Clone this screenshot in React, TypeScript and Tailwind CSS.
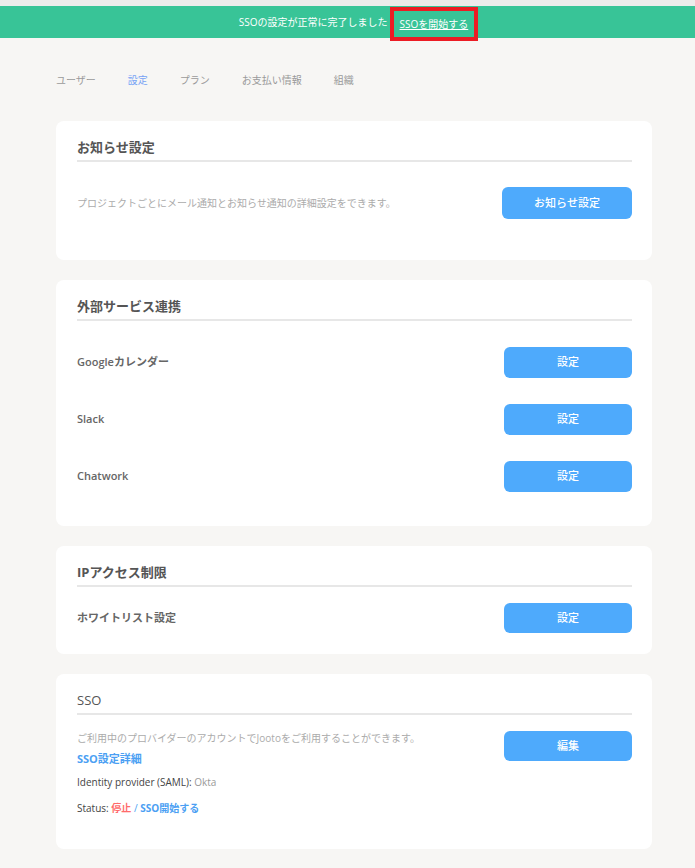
const tabs = [
  { label: "ユーザー", active: false },
  { label: "設定", active: true },
  { label: "プラン", active: false },
  { label: "お支払い情報", active: false },
  { label: "組織", active: false },
];

const Btn = ({ label, className = "" }: { label: string; className?: string }) => (
  <button
    className={`flex shrink-0 items-center justify-center rounded-[6px] bg-[#4eaafc] text-[11px] font-medium text-white ${className}`}
  >
    {label}
  </button>
);

const CardTitle = ({ title, bold = true }: { title: string; bold?: boolean }) => (
  <>
    <h2
      className={`text-[13px] leading-[20px] text-[#555] ${bold ? "font-bold" : "font-normal"}`}
    >
      {title}
    </h2>
    <div className="mt-[3px] h-[2px] bg-[#e7e7e7]" />
  </>
);

const App = () => {
  return (
    <div className="min-h-screen bg-[#f7f6f4] font-['Open_Sans','Noto_Sans_CJK_JP',sans-serif]">
      <div className="h-[6px] bg-[#ececeb]" />
      <div className="flex h-[32px] items-center justify-center bg-[#38c497] pl-[22px] text-[10px] text-white">
        <span>SSOの設定が正常に完了しました</span>
        <a
          href="#"
          className="ml-[2px] translate-y-[2px] border-[4px] border-[#ec1c24] px-[6px] leading-[26px] underline"
        >
          SSOを開始する
        </a>
      </div>

      <nav className="mt-[34px] flex gap-[32px] pl-[56px] text-[10px] leading-[16px]">
        {tabs.map((t) => (
          <span key={t.label} className={t.active ? "text-[#76a3f4]" : "text-[#9a9a9a]"}>
            {t.label}
          </span>
        ))}
      </nav>

      <div className="ml-[56px] mt-[33px] flex w-[596px] flex-col gap-[20px] pb-[19px]">
        {/* お知らせ設定 */}
        <section className="rounded-[8px] bg-white pb-[41px] pl-[21px] pr-[20px] pt-[16px]">
          <CardTitle title="お知らせ設定" />
          <div className="mt-[25px] flex items-center justify-between">
            <p className="text-[10px] text-[#ababab]">
              プロジェクトごとにメール通知とお知らせ通知の詳細設定をできます。
            </p>
            <Btn label="お知らせ設定" className="h-[32px] w-[130px]" />
          </div>
        </section>

        {/* 外部サービス連携 */}
        <section className="rounded-[8px] bg-white pb-[34px] pl-[21px] pr-[20px] pt-[16px]">
          <CardTitle title="外部サービス連携" />
          <div className="mt-[26px] flex flex-col gap-[26px]">
            {["Googleカレンダー", "Slack", "Chatwork"].map((name) => (
              <div key={name} className="flex items-center justify-between">
                <span className="text-[11px] font-semibold text-[#666]">{name}</span>
                <Btn label="設定" className="h-[31px] w-[128px]" />
              </div>
            ))}
          </div>
        </section>

        {/* IPアクセス制限 */}
        <section className="rounded-[8px] bg-white pb-[21px] pl-[21px] pr-[20px] pt-[16px]">
          <CardTitle title="IPアクセス制限" />
          <div className="mt-[16px] flex items-center justify-between">
            <span className="text-[11px] font-semibold text-[#666]">ホワイトリスト設定</span>
            <Btn label="設定" className="h-[30px] w-[128px]" />
          </div>
        </section>

        {/* SSO */}
        <section className="rounded-[8px] bg-white pb-[34px] pl-[21px] pr-[20px] pt-[16px]">
          <CardTitle title="SSO" bold={false} />
          <div className="mt-[16px] flex items-start justify-between">
            <div className="flex flex-col">
              <p className="text-[10px] leading-[14px] text-[#ababab]">
                ご利用中のプロバイダーのアカウントでJootoをご利用することができます。
              </p>
              <a href="#" className="mt-[7px] text-[11px] font-bold leading-[14px] text-[#4b9ff3]">
                SSO設定詳細
              </a>
              <p className="mt-[9px] text-[10px] leading-[14px] text-[#444]">
                Identity provider (SAML): <span className="text-[#999]">Okta</span>
              </p>
              <p className="mt-[12px] text-[10px] leading-[14px] text-[#444]">
                Status: <span className="font-bold text-[#ff6b6b]">停止</span>
                <span className="text-[#4b9ff3]"> / </span>
                <a href="#" className="font-bold text-[#4b9ff3]">
                  SSO開始する
                </a>
              </p>
            </div>
            <Btn label="編集" className="h-[30px] w-[128px]" />
          </div>
        </section>
      </div>
    </div>
  );
};

export default App;
